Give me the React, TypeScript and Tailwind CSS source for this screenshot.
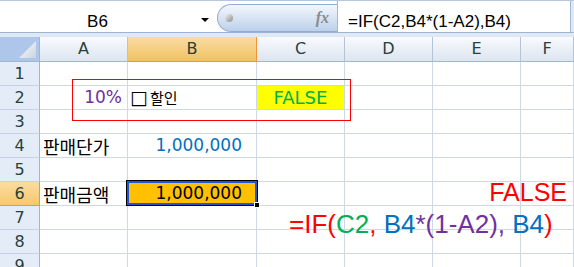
import React from "react";

const cols = ["A", "B", "C", "D", "E", "F"];
const rows = [1, 2, 3, 4, 5, 6, 7, 8, 9];

const FormulaBar = () => {
  return (
    <div className="flex h-[33px] border-t border-b border-t-[#b5c6dd] border-b-[#9db3d0] bg-[#dfe8f5]">
      {/* name box */}
      <div className="flex w-[217px] items-start bg-white pt-[12px]">
        <span className="w-[195px] text-center font-['Liberation_Sans',sans-serif] text-[17px] leading-none text-black">
          B6
        </span>
        <span className="ml-[6px] mt-[5px] h-0 w-0 border-l-[4px] border-r-[4px] border-t-[4px] border-l-transparent border-r-transparent border-t-black" />
      </div>
      {/* splitter pill + fx */}
      <div className="relative w-[120px] bg-white">
        <div className="absolute bottom-0 left-0 right-0 top-[3px] flex items-center rounded-l-[14px] border border-r-0 border-[#94aed3] bg-gradient-to-b from-[#f3f7fc] via-[#d8e4f4] to-[#bcd0ea]">
          <span className="ml-[7px] h-[8px] w-[8px] rounded-full bg-gradient-to-br from-[#f4f4f4] to-[#8d8d8d]" />
          <span className="ml-auto mr-[8px] font-['Liberation_Serif',serif] text-[16px] font-bold italic leading-none text-[#8a8a8a]">
            fx
          </span>
        </div>
      </div>
      {/* formula input */}
      <div className="w-[234px] border-l border-r border-[#a3b7d3] bg-white pl-[10px] pt-[12px] font-['Liberation_Sans',sans-serif] text-[17px] leading-none text-black">
        =IF(C2,B4*(1-A2),B4)
      </div>
    </div>
  );
};

const Sheet = () => {
  const cellBase =
    "flex h-[24px] items-center border-b border-r border-[#d0d7e5] overflow-visible whitespace-nowrap";

  const renderCell = (r: number, c: string) => {
    if (r === 2 && c === "A")
      return (
        <div key={c} className={`${cellBase} justify-end pr-[5px] text-[17px] text-[#7030a0]`}>
          10%
        </div>
      );
    if (r === 2 && c === "B")
      return (
        <div key={c} className={`${cellBase} pl-[2px] text-black`}>
          <span className="text-[19px]">□</span>
          <span className="ml-[2px] font-['Noto_Sans_CJK_KR',sans-serif] text-[15px]">할인</span>
        </div>
      );
    if (r === 2 && c === "C")
      return (
        <div key={c} className={`${cellBase} justify-center bg-[#ffff00] text-[18px] text-[#00b050]`}>
          FALSE
        </div>
      );
    if ((r === 4 || r === 6) && c === "A")
      return (
        <div
          key={c}
          className={`${cellBase} pl-[3px] font-['Noto_Sans_CJK_KR',sans-serif] text-[18px] text-black`}
        >
          {r === 4 ? "판매단가" : "판매금액"}
        </div>
      );
    if (r === 4 && c === "B")
      return (
        <div key={c} className={`${cellBase} justify-end pr-[14px] text-[17px] text-[#0070c0]`}>
          1,000,000
        </div>
      );
    if (r === 6 && c === "B")
      return (
        <div key={c} className={`${cellBase} justify-end bg-[#ffc000] pr-[14px] text-[17px] text-black`}>
          1,000,000
        </div>
      );
    return <div key={c} className={cellBase} />;
  };

  return (
    <div className="relative font-['DejaVu_Sans',sans-serif] leading-none">
      <div className="grid grid-cols-[40px_88px_129px_88px_88px_88px_53px]">
        {/* corner */}
        <div className="relative h-[25px] border-b border-r border-[#9eb6ce] bg-[#aec6e9]">
          <svg className="absolute bottom-[3px] right-[3px]" width="17" height="17" viewBox="0 0 17 17">
            <defs>
              <linearGradient id="tri" x1="0" y1="0" x2="1" y2="1">
                <stop offset="0" stopColor="#ffffff" />
                <stop offset="1" stopColor="#c9d3df" />
              </linearGradient>
            </defs>
            <polygon points="17,0 17,17 0,17" fill="url(#tri)" />
          </svg>
        </div>
        {cols.map((c) => (
          <div
            key={c}
            className={
              c === "B"
                ? "flex h-[25px] items-center justify-center border-b border-r border-[#f29536] bg-gradient-to-b from-[#f9dca2] to-[#f1c25f] text-[16px] text-[#27413e]"
                : "flex h-[25px] items-center justify-center border-b border-r border-b-[#9eb6ce] border-r-[#b3c4da] bg-gradient-to-b from-[#f8fafd] to-[#dde5f0] text-[16px] text-[#27413e]"
            }
          >
            {c}
          </div>
        ))}

        {rows.map((r) => (
          <React.Fragment key={r}>
            <div
              className={
                r === 6
                  ? "flex h-[24px] items-center justify-center border-b border-r border-[#f29536] bg-gradient-to-b from-[#fbdca0] to-[#f6c86e] text-[16px] text-[#27413e]"
                  : "flex h-[24px] items-center justify-center border-b border-r border-b-[#c5d3e6] border-r-[#9eb6ce] bg-[#e4ecf7] text-[16px] text-[#27413e]"
              }
            >
              {r}
            </div>
            {cols.map((c) => renderCell(r, c))}
          </React.Fragment>
        ))}
      </div>

      {/* red box round A2:C2 */}
      <div className="absolute left-[72px] top-[42px] h-[42px] w-[279px] border border-[#ff0000]" />

      {/* B6 selection */}
      <div className="absolute left-[126px] top-[143px] h-[26px] w-[132px] border border-black">
        <div className="h-full w-full border-2 border-[#1f55d6]" />
      </div>
      <div className="absolute left-[254px] top-[165px] h-[6px] w-[6px] border border-white bg-black" />

      {/* notes */}
      <div className="absolute right-[7px] top-[143px] font-['Liberation_Sans',sans-serif] text-[25px] leading-none text-[#ff0000]">
        FALSE
      </div>
      <div className="absolute left-[289px] top-[174px] whitespace-nowrap font-['Liberation_Sans',sans-serif] text-[26px] leading-none">
        <span className="text-[#ff0000]">=IF(</span>
        <span className="text-[#00b050]">C2</span>
        <span className="text-[#ff0000]">,</span>
        <span className="text-[#0070c0]"> B4</span>
        <span className="text-[#7030a0]">*(1-A2),</span>
        <span className="text-[#0070c0]"> B4</span>
        <span className="text-[#ff0000]">)</span>
      </div>
    </div>
  );
}

export default function App() {
  return (
    <div className="h-[267px] w-[574px] overflow-hidden bg-white">
      <FormulaBar />
      <div className="h-[4px] bg-[#dfe8f5]" />
      <Sheet />
    </div>
  );
}
